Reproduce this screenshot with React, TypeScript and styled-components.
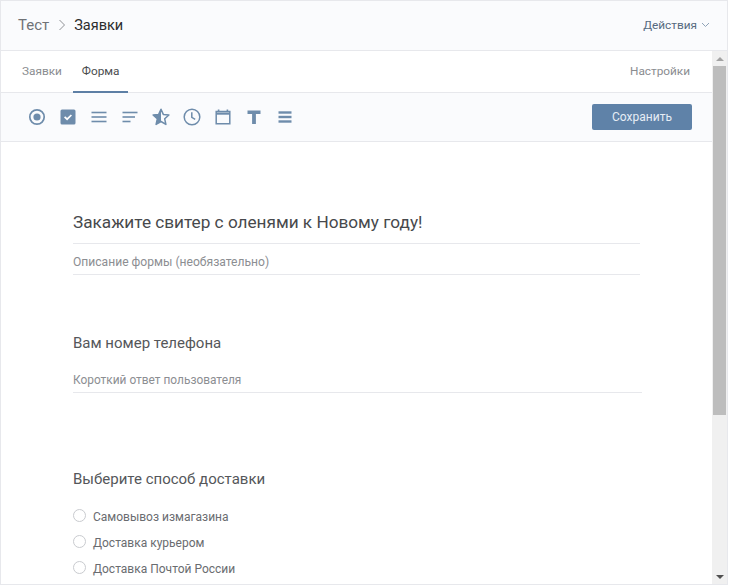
import React, { FC } from 'react';
import styled, { createGlobalStyle } from 'styled-components';

const GlobalStyle = createGlobalStyle`
  html, body {
    margin: 0;
    padding: 0;
    background: #ffffff;
    overflow: hidden;
  }
  * {
    box-sizing: border-box;
  }
`;

const Frame = styled.div`
  display: flex;
  flex-direction: column;
  width: 728px;
  height: 585px;
  font-family: Roboto, 'Liberation Sans', sans-serif;
  background: #ffffff;
  border: 1px solid #e7e8ec;
  overflow: hidden;
`;

const Header = styled.div`
  display: flex;
  align-items: center;
  justify-content: space-between;
  flex: 0 0 50px;
  padding: 0 17px 1px 17px;
  background: #fafbfd;
  border-bottom: 1px solid #e7e8ec;
`;

const Breadcrumbs = styled.div`
  display: flex;
  align-items: center;
  font-size: 15px;
  color: #6f7276;
`;

const Current = styled.span`
  font-size: 14.5px;
  color: #2c2d2e;
`;

const Crumb = styled.svg`
  margin: 0 8px 0 9px;
`;

const Actions = styled.div`
  display: flex;
  align-items: center;
  gap: 4px;
  font-size: 11.8px;
  color: #56697f;
`;

const Body = styled.div`
  display: flex;
  flex: 1;
  min-height: 0;
`;

const Content = styled.div`
  flex: 1;
  min-width: 0;
  overflow: hidden;
`;

const Tabs = styled.div`
  display: flex;
  justify-content: space-between;
  height: 42px;
  padding: 0 22px 0 12px;
  border-bottom: 1px solid #e7e8ec;
`;

const TabGroup = styled.div`
  display: flex;
`;

const Tab = styled.div<{ $active?: boolean; $muted?: boolean }>`
  display: flex;
  align-items: center;
  height: 42px;
  padding: 0 ${(p) => (p.$muted ? '0' : '9px')};
  margin-left: ${(p) => (p.$active ? '2px' : '0')};
  font-size: 11.8px;
  color: ${(p) => (p.$active ? '#4b4d50' : '#8a8c90')};
  border-bottom: 2px solid ${(p) => (p.$active ? '#5d7fa5' : 'transparent')};
`;

const Toolbar = styled.div`
  display: flex;
  align-items: center;
  justify-content: space-between;
  height: 49px;
  padding: 0 20px 0 24px;
  background: #fafbfd;
  border-bottom: 1px solid #e7e8ec;
`;

const Tools = styled.div`
  display: flex;
  align-items: center;
  gap: 7px;
`;

const Tool = styled.svg`
  display: block;
  width: 24px;
  height: 24px;
  color: #6e8cab;
`;

const SaveButton = styled.button`
  width: 100px;
  height: 26px;
  padding: 0;
  font-family: inherit;
  font-size: 12px;
  color: #e6edf5;
  background: #5f82a8;
  border: none;
  border-radius: 2px;
`;

const Form = styled.div`
  padding: 68px 0 0 72px;
`;

const FormTitle = styled.div`
  width: 567px;
  height: 34px;
  font-size: 17.2px;
  line-height: 24px;
  color: #47494c;
  border-bottom: 1px solid #e7e8ec;
`;

const FormDescription = styled.div`
  width: 567px;
  height: 31px;
  font-size: 12.1px;
  line-height: 37px;
  color: #8c8e92;
  border-bottom: 1px solid #e7e8ec;
`;

const Question = styled.div<{ $gap: number }>`
  margin-top: ${(p) => p.$gap}px;
  font-size: 15px;
  line-height: 20px;
  color: #55575a;
`;

const Answer = styled.div`
  width: 569px;
  height: 32px;
  margin-top: 8px;
  padding-top: 11px;
  font-size: 11.9px;
  line-height: 16px;
  color: #8c8e92;
  border-bottom: 1px solid #e7e8ec;
`;

const Options = styled.div`
  display: flex;
  flex-direction: column;
  gap: 12px;
  margin-top: 21px;
`;

const Option = styled.label`
  display: flex;
  align-items: center;
  gap: 7px;
  height: 14px;
  font-size: 12px;
  color: #6a6c70;
`;

const Radio = styled.span`
  flex: 0 0 13px;
  width: 13px;
  height: 13px;
  margin-top: -4px;
  background: #ffffff;
  border: 1px solid #c9cbcf;
  border-radius: 50%;
`;

const Scrollbar = styled.div`
  display: flex;
  flex-direction: column;
  align-items: center;
  flex: 0 0 15px;
  background: #f0f0f0;
`;

const ScrollArrow = styled.div<{ $down?: boolean }>`
  flex: 0 0 15px;
  display: flex;
  align-items: center;
  justify-content: center;
  margin-top: ${(p) => (p.$down ? 'auto' : '0')};
  &::before {
    content: '';
    border-left: 4px solid transparent;
    border-right: 4px solid transparent;
    border-${(p) => (p.$down ? 'top' : 'bottom')}: 4px solid ${(p) => (p.$down ? '#505050' : '#a3a3a3')};
  }
`;

const ScrollThumb = styled.div`
  width: 100%;
  height: 349px;
  background: #bdbdbd;
  border: 1px solid #f0f0f0;
  border-width: 0 1px;
`;

const Line: FC<{ y: number; x1?: number; x2?: number; w?: number }> = ({ y, x1 = 5, x2 = 19, w = 2 }) => (
  <path d={`M${x1} ${y}H${x2}`} stroke="currentColor" strokeWidth={w} fill="none" />
);

const icons = [
  <>
    <circle cx="12" cy="12" r="7.2" fill="none" stroke="currentColor" strokeWidth="1.7" />
    <circle cx="12" cy="12" r="3.6" fill="currentColor" />
  </>,
  <>
    <rect x="4.5" y="4.5" width="15" height="15" rx="1.5" fill="currentColor" />
    <path d="M8.6 11.8l2.5 2.4 4.3-4.2" fill="none" stroke="#ffffff" strokeWidth="1.7" />
  </>,
  <>
    <Line y={7.5} x1={4.5} x2={19.5} w={1.6} />
    <Line y={12} x1={4.5} x2={19.5} w={1.6} />
    <Line y={16.5} x1={4.5} x2={19.5} w={1.6} />
  </>,
  <>
    <Line y={7.5} x1={4.5} x2={19.5} w={1.6} />
    <Line y={12} x1={4.5} x2={17} w={1.6} />
    <Line y={16.5} x1={4.5} x2={12.5} w={1.6} />
  </>,
  <>
    <path
      d="M12 4.2l2.3 5.2 5.6.6-4.2 3.8 1.2 5.6-4.9-2.9-4.9 2.9 1.2-5.6L4.1 10l5.6-.6z"
      fill="none"
      stroke="currentColor"
      strokeWidth="1.5"
      strokeLinejoin="round"
    />
    <path d="M12 4.2L9.7 9.4l-5.6.6 4.2 3.8-1.2 5.6 4.9-2.9z" fill="currentColor" />
  </>,
  <>
    <circle cx="12" cy="12" r="7.8" fill="none" stroke="currentColor" strokeWidth="1.5" />
    <path d="M11.8 7.2v5.2l3.4 2" fill="none" stroke="currentColor" strokeWidth="1.5" />
  </>,
  <>
    <path d="M5.2 6.5h13.6v12.3H5.2z" fill="none" stroke="currentColor" strokeWidth="1.5" />
    <path d="M5 8.6h14" stroke="currentColor" strokeWidth="2.2" />
    <path d="M7.6 4.6v2M16.4 4.6v2" stroke="currentColor" strokeWidth="1.6" />
  </>,
  <path d="M5.5 5.5h13v3.4h-4.6v10h-3.8v-10H5.5z" fill="currentColor" />,
  <>
    <Line y={7.5} x1={5.5} x2={18.5} w={2.4} />
    <Line y={12} x1={5.5} x2={18.5} w={2.4} />
    <Line y={16.5} x1={5.5} x2={18.5} w={2.4} />
  </>,
];

const deliveryOptions = ['Самовывоз измагазина', 'Доставка курьером', 'Доставка Почтой России'];

const App: FC = () => (
  <>
    <GlobalStyle />
    <Frame>
      <Header>
        <Breadcrumbs>
          Тест
          <Crumb width="8" height="12" viewBox="0 0 8 12">
            <path d="M1.5 1l5 5-5 5" fill="none" stroke="#8f9196" strokeWidth="1" />
          </Crumb>
          <Current>Заявки</Current>
        </Breadcrumbs>
        <Actions>
          Действия
          <svg width="9" height="6" viewBox="0 0 9 6">
            <path d="M1 1l3.5 3.5L8 1" fill="none" stroke="#8fa3b8" strokeWidth="1" />
          </svg>
        </Actions>
      </Header>
      <Body>
        <Content>
          <Tabs>
            <TabGroup>
              <Tab>Заявки</Tab>
              <Tab $active>Форма</Tab>
            </TabGroup>
            <Tab $muted>Настройки</Tab>
          </Tabs>
          <Toolbar>
            <Tools>
              {icons.map((icon, i) => (
                <Tool key={i} viewBox="0 0 24 24">
                  {icon}
                </Tool>
              ))}
            </Tools>
            <SaveButton>Сохранить</SaveButton>
          </Toolbar>
          <Form>
            <FormTitle>Закажите свитер с оленями к Новому году!</FormTitle>
            <FormDescription>Описание формы (необязательно)</FormDescription>
            <Question $gap={58}>Вам номер телефона</Question>
            <Answer>Короткий ответ пользователя</Answer>
            <Question $gap={76}>Выберите способ доставки</Question>
            <Options>
              {deliveryOptions.map((option) => (
                <Option key={option}>
                  <Radio />
                  {option}
                </Option>
              ))}
            </Options>
          </Form>
        </Content>
        <Scrollbar>
          <ScrollArrow />
          <ScrollThumb />
          <ScrollArrow $down />
        </Scrollbar>
      </Body>
    </Frame>
  </>
);

export default App;
